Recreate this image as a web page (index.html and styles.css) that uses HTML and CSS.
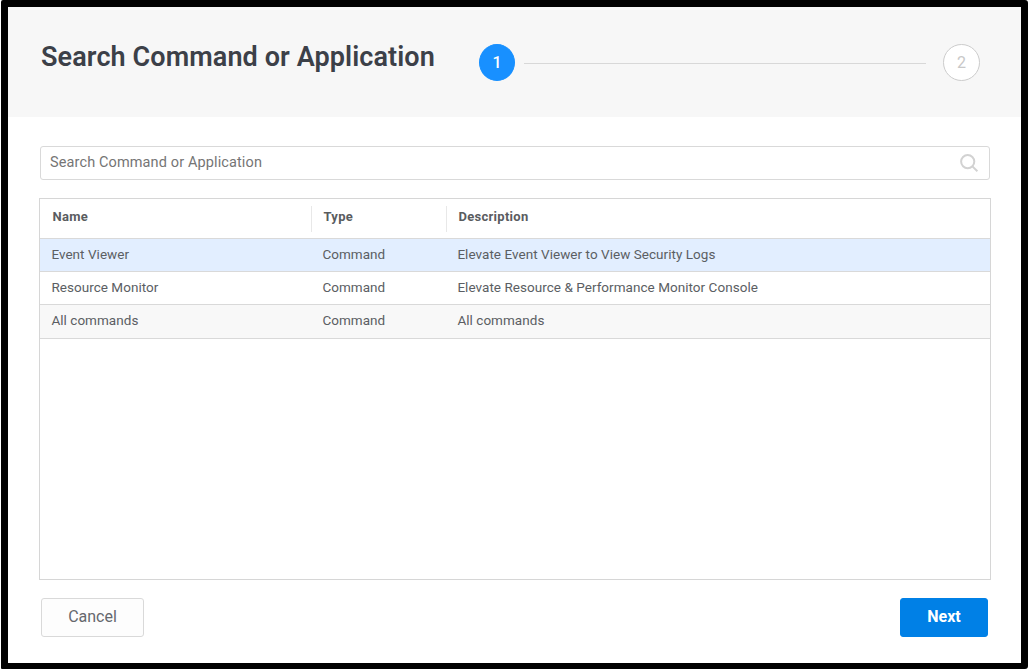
FILE: index.html
```html
<!DOCTYPE html>
<html lang="en">
<head>
<meta charset="utf-8">
<title>Search Command or Application</title>
<link rel="stylesheet" href="styles.css">
</head>
<body>
<main class="dialog">
  <header class="header">
    <h1 class="title"><span>Search Command or Application</span></h1>
    <div class="steps">
      <span class="step step-active">1</span>
      <span class="step-line"></span>
      <span class="step">2</span>
    </div>
  </header>
  <section class="content">
    <div class="search">
      <span class="placeholder">Search Command or Application</span>
      <svg class="search-icon" viewBox="0 0 20 20" width="20" height="20"><circle cx="8.7" cy="8.6" r="6.6"/><path d="M13.4 13.4 18.4 18.2"/></svg>
    </div>
    <div class="table">
      <div class="row head"><span>Name</span><span>Type</span><span>Description</span></div>
      <div class="row selected"><span>Event Viewer</span><span>Command</span><span>Elevate Event Viewer to View Security Logs</span></div>
      <div class="row"><span>Resource Monitor</span><span>Command</span><span>Elevate Resource &amp; Performance Monitor Console</span></div>
      <div class="row alt"><span>All commands</span><span>Command</span><span>All commands</span></div>
    </div>
    <footer class="footer">
      <button class="button">Cancel</button>
      <button class="button primary">Next</button>
    </footer>
  </section>
</main>
</body>
</html>
```
FILE: styles.css
```css
* { box-sizing: border-box; }
body {
  margin: 0;
  padding: 0 0 1px 1px;
  height: 670px;
  background: #fff;
  font-family: Roboto, "Liberation Sans", sans-serif;
  overflow: hidden;
}
.dialog {
  width: 1027px;
  height: 669px;
  border: 7px solid #000;
  border-bottom-width: 6px;
  border-radius: 2px 3px 3px 1px;
  background: #fff;
}
.header {
  display: flex;
  height: 110px;
  padding: 37px 41px 0 33px;
  background: #f7f7f7;
}
.title {
  width: 438px;
  margin: -3px 0 0;
  font-size: 27px;
  font-weight: 600;
  line-height: 32px;
  letter-spacing: 0.1px;
  color: #3c4048;
  white-space: nowrap;
}
.steps {
  display: flex;
  flex: 1;
  align-items: center;
  height: 37px;
}
.step {
  width: 37px;
  height: 37px;
  border: 1.5px solid #ccc;
  border-radius: 50%;
  background: #fff;
  color: #c8c8c8;
  font-size: 16px;
  line-height: 36px;
  text-align: center;
}
.step-active {
  width: 36px;
  border-color: #1890ff;
  background: #1890ff;
  color: #fff;
  font-weight: 500;
}
.step-line {
  flex: 1;
  height: 1px;
  margin: 1px 17px 0 9px;
  background: #d8d8d8;
}
.content { padding: 29px 30px 0 31px; }
.search {
  display: flex;
  align-items: center;
  justify-content: space-between;
  width: 950px;
  height: 34px;
  margin-left: 1px;
  padding: 0 10px 0 9px;
  border: 1px solid #d9d9d9;
  border-radius: 3px;
}
.placeholder {
  margin-top: -2px;
  font-size: 14.5px;
  color: #757575;
  letter-spacing: 0.12px;
}
.search-icon {
  fill: none;
  stroke: #d2d2d2;
  stroke-width: 2;
}
.table {
  width: 952px;
  height: 382px;
  margin-top: 18px;
  border: 1px solid #d6d6d6;
}
.row {
  display: grid;
  grid-template-columns: 271px 135px 1fr;
  height: 33px;
  border-bottom: 1px solid #d9d9d9;
  color: #5b5e63;
  font-size: 13.5px;
  line-height: 31px;
  letter-spacing: 0.04px;
}
.row span { padding-left: 11.4px; }
.head {
  height: 40px;
  padding-top: 7px;
  color: #5a5c5f;
  font-size: 13px;
  font-weight: 700;
  line-height: 22px;
  letter-spacing: 0.28px;
}
.head span {
  height: 26px;
  padding-left: 11.5px;
  border-left: 1px solid #e8e8e8;
}
.head span:first-child { border-left-color: transparent; }
.selected { background: #e2eeff; }
.alt { height: 34px; background: #f8f8f8; }
.footer {
  display: flex;
  justify-content: space-between;
  margin: 18px 3px 0 2px;
}
.button {
  width: 103px;
  height: 39px;
  padding: 0 0 2px;
  border: 1px solid #d9d9d9;
  border-radius: 3px;
  background: #fdfdfd;
  color: #65686d;
  font-family: inherit;
  font-size: 16px;
}
.primary {
  width: 88px;
  border-color: #0080e6;
  background: #0080e6;
  color: #fff;
  font-weight: 700;
}
```
